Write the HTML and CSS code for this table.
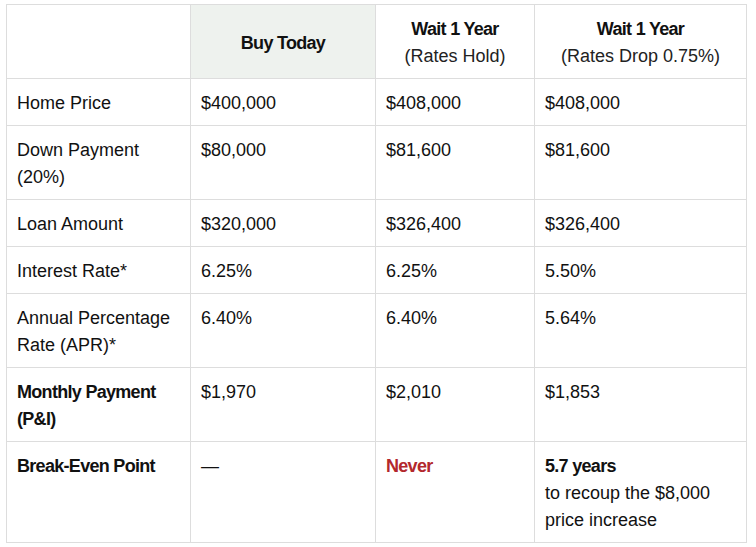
FILE: index.html
```html
<!DOCTYPE html>
<html>
<head>
<meta charset="utf-8">
<link rel="stylesheet" href="styles.css">
</head>
<body>
<div class="wrap">
<table class="cmp">
  <colgroup>
    <col class="c1"><col class="c2"><col class="c3"><col class="c4">
  </colgroup>
  <thead>
    <tr>
      <th></th>
      <th class="hl"><strong>Buy Today</strong></th>
      <th><strong>Wait 1 Year</strong><br><span class="sub">(Rates Hold)</span></th>
      <th><strong>Wait 1 Year</strong><br><span class="sub">(Rates Drop 0.75%)</span></th>
    </tr>
  </thead>
  <tbody>
    <tr><td>Home Price</td><td>$400,000</td><td>$408,000</td><td>$408,000</td></tr>
    <tr><td>Down Payment (20%)</td><td>$80,000</td><td>$81,600</td><td>$81,600</td></tr>
    <tr><td>Loan Amount</td><td>$320,000</td><td>$326,400</td><td>$326,400</td></tr>
    <tr><td>Interest Rate*</td><td>6.25%</td><td>6.25%</td><td>5.50%</td></tr>
    <tr><td>Annual Percentage Rate (APR)*</td><td>6.40%</td><td>6.40%</td><td>5.64%</td></tr>
    <tr><td class="b">Monthly Payment (P&amp;I)</td><td>$1,970</td><td>$2,010</td><td>$1,853</td></tr>
    <tr><td class="b">Break-Even Point</td><td>—</td><td class="b red">Never</td><td><strong>5.7 years</strong><br>to recoup the $8,000 price increase</td></tr>
  </tbody>
</table>
</div>
</body>
</html>
```
FILE: styles.css
```css
html, body {
  margin: 0;
  padding: 0;
  background: #ffffff;
}
.wrap {
  padding: 4px 0 0 6px;
}
.cmp {
  border-collapse: collapse;
  table-layout: fixed;
  width: 740px;
  font-family: "Liberation Sans", Arial, sans-serif;
  font-size: 18px;
  line-height: 27px;
  color: #111111;
}
.c1 { width: 184px; }
.c2 { width: 185px; }
.c3 { width: 159px; }
.c4 { width: 212px; }
.cmp th, .cmp td {
  border: 1px solid #dddddd;
  padding: 11px 10px 8px;
  text-align: left;
  vertical-align: top;
}
.cmp th {
  text-align: center;
  vertical-align: middle;
  font-weight: normal;
  color: #111111;
}
.cmp th strong {
  font-weight: bold;
  letter-spacing: -0.7px;
}
.cmp .hl { background: #eef2ee; }
.cmp .sub { color: #222222; }
.cmp .b {
  font-weight: bold;
  color: #111111;
  letter-spacing: -0.7px;
}
.cmp .red { color: #b3282d; }
.cmp td strong {
  font-weight: bold;
  color: #111111;
  letter-spacing: -0.7px;
}
```
